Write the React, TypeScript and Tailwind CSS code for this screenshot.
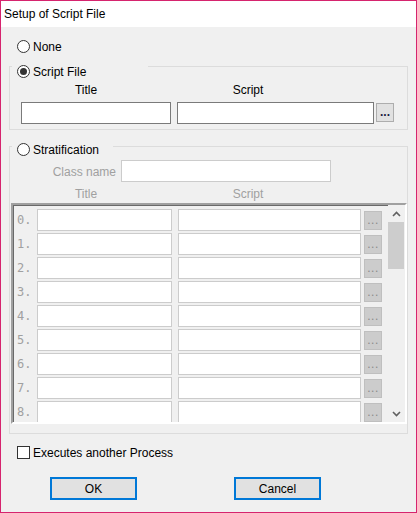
import React from "react";

function Radio({ checked }: { checked?: boolean }) {
  return (
    <span className="w-[13px] h-[13px] rounded-full border border-[#333333] bg-white flex items-center justify-center shrink-0">
      {checked ? <span className="w-[7px] h-[7px] rounded-full bg-[#333333]" /> : null}
    </span>
  );
}

function DotsButton({ disabled }: { disabled?: boolean }) {
  return (
    <div
      className={
        disabled
          ? "w-[18px] h-[19px] border border-[#bfbfbf] bg-[#cccccc] flex items-end justify-center shrink-0"
          : "w-[18px] h-[19px] border border-[#adadad] bg-[#e1e1e1] flex items-end justify-center shrink-0"
      }
    >
      <span
        className={
          disabled
            ? "text-[12px] leading-none pb-[3px] text-[#8a8a8a] tracking-[0.5px]"
            : "text-[12px] leading-none pb-[3px] text-[#1a1a40] font-bold"
        }
      >
        ...
      </span>
    </div>
  );
}

export default function App() {
  const rows = [0, 1, 2, 3, 4, 5, 6, 7, 8];
  return (
    <div className="w-[417px] h-[513px] border border-[#d6246e] bg-[#f0f0f0] flex flex-col font-['Liberation_Sans',sans-serif] text-[12px] text-black overflow-hidden">
      <div className="h-[26px] bg-white pl-[3px] flex items-center shrink-0">
        <span>Setup of Script File</span>
      </div>
      <div className="flex-1 px-[8px] flex flex-col">
        {/* None */}
        <div className="mt-[13px] ml-[8px] h-[13px] flex items-center">
          <Radio />
          <span className="ml-[3px] leading-[13px] pt-[1px]">None</span>
        </div>

        {/* Script File group */}
        <div className="relative mt-[13px] h-[64px] border border-[#dcdcdc] shrink-0">
          <div className="absolute left-[2px] top-[-2px] w-[136px] h-[13px] bg-[#f0f0f0] pl-[5px] flex items-center">
            <Radio checked />
            <span className="ml-[3px] leading-[13px] pt-[1px]">Script File</span>
          </div>
          <div className="pt-[16px] pl-[11px]">
            <div className="flex h-[14px] leading-[14px]">
              <span className="w-[130px] text-center">Title</span>
              <span className="ml-[26px] w-[142px] text-center">Script</span>
            </div>
            <div className="mt-[5px] flex items-start">
              <div className="w-[150px] h-[22px] border border-[#7a7a7a] bg-white" />
              <div className="ml-[6px] w-[197px] h-[22px] border border-[#7a7a7a] bg-white" />
              <div className="ml-[2px] mt-[1px]">
                <DotsButton />
              </div>
            </div>
          </div>
        </div>

        {/* Stratification group */}
        <div className="relative mt-[16px] h-[288px] border border-[#dcdcdc] shrink-0">
          <div className="absolute left-[2px] top-[-4px] w-[101px] h-[13px] bg-[#f0f0f0] pl-[5px] flex items-center">
            <Radio />
            <span className="ml-[3px] leading-[13px] pt-[1px]">Stratification</span>
          </div>
          <div className="pt-[13px] flex items-center">
            <span className="w-[106px] text-right text-[#a0a0a0] pt-[1px]">Class name</span>
            <div className="ml-[5px] w-[210px] h-[22px] border border-[#cccccc] bg-white" />
          </div>
          <div className="mt-[5px] pl-[11px] flex h-[14px] leading-[14px] text-[#a0a0a0]">
            <span className="w-[130px] text-center">Title</span>
            <span className="ml-[26px] w-[142px] text-center">Script</span>
          </div>
          <div className="mt-[2px] ml-[1px] w-[396px] h-[221px] border-2 border-t-[#a0a0a0] border-l-[#a0a0a0] border-r-[#ffffff] border-b-[#ffffff] shadow-[inset_1px_1px_0_#696969] flex overflow-hidden">
            <div className="flex-1 pt-[4px] pl-[4px] flex flex-col gap-[2px]">
              {rows.map((r) => (
                <div key={r} className="flex items-start h-[22px] shrink-0">
                  <span className="w-[20px] leading-[22px] text-[#a0a0a0] font-['DejaVu_Sans_Mono',monospace] text-[12px]">
                    {r}.
                  </span>
                  <div className="w-[135px] h-[22px] border border-[#cccccc] bg-white" />
                  <div className="ml-[6px] w-[183px] h-[22px] border border-[#cccccc] bg-white" />
                  <div className="ml-[3px] mt-[2px]">
                    <DotsButton disabled />
                  </div>
                </div>
              ))}
            </div>
            <div className="w-[17px] flex flex-col bg-[#f0f0f0]">
              <div className="h-[17px] flex items-center justify-center">
                <svg width="9" height="6" viewBox="0 0 9 6">
                  <path d="M1 5 L4.5 1.5 L8 5" fill="none" stroke="#606060" strokeWidth="1.6" />
                </svg>
              </div>
              <div className="h-[47px] w-[16px] bg-[#cdcdcd]" />
              <div className="flex-1" />
              <div className="h-[17px] flex items-center justify-center">
                <svg width="9" height="6" viewBox="0 0 9 6">
                  <path d="M1 1 L4.5 4.5 L8 1" fill="none" stroke="#606060" strokeWidth="1.6" />
                </svg>
              </div>
            </div>
          </div>
        </div>

        {/* Checkbox */}
        <div className="mt-[12px] ml-[8px] h-[13px] flex items-center">
          <span className="w-[13px] h-[13px] border border-[#333333] bg-white shrink-0" />
          <span className="ml-[3px] leading-[13px] pt-[1px]">Executes another Process</span>
        </div>

        {/* Buttons */}
        <div className="mt-[18px] ml-[41px] flex">
          <div className="w-[87px] h-[23px] border-2 border-[#0078d7] bg-[#e1e1e1] flex items-center justify-center">OK</div>
          <div className="ml-[97px] w-[87px] h-[23px] border-2 border-[#0078d7] bg-[#e1e1e1] flex items-center justify-center">Cancel</div>
        </div>
      </div>
    </div>
  );
}
